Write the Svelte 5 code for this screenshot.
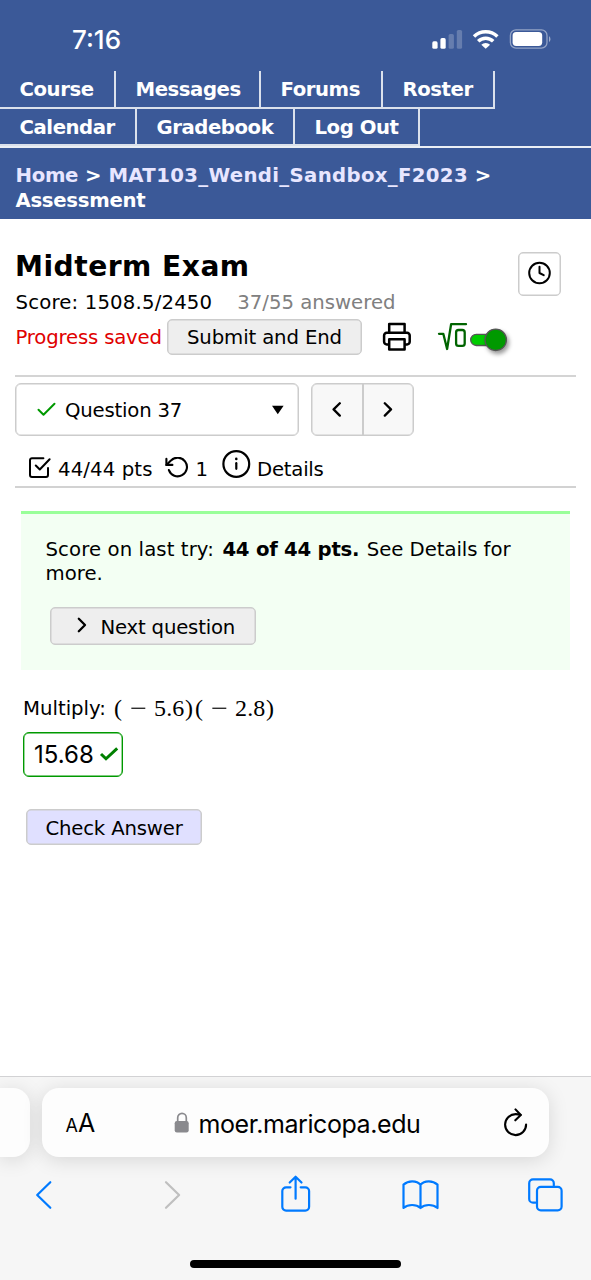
<script>
  const rows = [
    [
      { label: 'Course', w: 116 },
      { label: 'Messages', w: 145 },
      { label: 'Forums', w: 122 },
      { label: 'Roster', w: 111.5 }
    ],
    [
      { label: 'Calendar', w: 137 },
      { label: 'Gradebook', w: 158 },
      { label: 'Log Out', w: 125 }
    ]
  ];
</script>

<div class="page">
  <header>
    <div class="status">
      <span class="time">7:16</span>
      <svg width="120" height="24" viewBox="0 0 120 24" fill="#fff">
        <rect x="0.3" y="13.3" width="5.3" height="7.5" rx="1.6" />
        <rect x="8.4" y="10.1" width="5.3" height="10.7" rx="1.6" />
        <rect x="16.6" y="6" width="5.3" height="14.8" rx="1.6" opacity=".22" />
        <rect x="24.8" y="2" width="5.3" height="18.8" rx="1.6" opacity=".22" />
        <g fill="none" stroke="#fff" stroke-width="3.5">
          <path d="M42 8.400a17 17 0 0 1 23.400 0" />
          <path d="M46.200 13.200a10.800 10.800 0 0 1 15 0" />
        </g>
        <path d="M49.300 16.700a6.300 6.300 0 0 1 8.800 0L53.700 20.800z" />
        <rect x="78.400" y="1.800" width="36.600" height="18.400" rx="5.600" fill="none" stroke="#fff" stroke-width="1.300" opacity=".45" />
        <rect x="80.600" y="4.100" width="29.600" height="13.800" rx="3.600" />
        <path d="M117 7.900q3 3.200 0 6.400z" opacity=".5" />
      </svg>
    </div>
    <nav>
      {#each rows as row}
        <div class="navrow">
          {#each row as c}
            <a style:width="{c.w}px">{c.label}</a>
          {/each}
        </div>
      {/each}
    </nav>
    <div class="crumbs">
      <div><span class="lnk home-link">Home</span> &gt; <span class="lnk course">MAT103_Wendi_Sandbox_F2023</span> &gt;</div>
      <div class="here">Assessment</div>
    </div>
  </header>

  <main>
    <div class="top">
      <div>
        <h1>Midterm Exam</h1>
        <div class="score"><span class="total">Score: 1508.5/2450</span><span class="answered">37/55 answered</span></div>
      </div>
      <button class="clock" aria-label="Time">
        <svg width="26" height="26" viewBox="0 0 26 26" fill="none" stroke="#000" stroke-width="2" stroke-linecap="round" stroke-linejoin="round">
          <circle cx="12.500" cy="12" r="10.300" /><path d="M12.500 5.800V12l4.200 2.200" />
        </svg>
      </button>
    </div>
    <div class="progress">
      <span class="saved">Progress saved</span>
      <button class="btn submit">Submit and End</button>
      <svg class="print" width="30" height="30" viewBox="0 0 30 30" fill="none" stroke="#000" stroke-width="2.500" stroke-linejoin="round">
        <path d="M7.200 10.800V2h15.400v8.800" />
        <path d="M7.200 22.400H4.700a2.600 2.600 0 0 1-2.600-2.600v-6.400a2.600 2.600 0 0 1 2.600-2.600h20.400a2.600 2.600 0 0 1 2.600 2.600v6.400a2.600 2.600 0 0 1-2.600 2.600h-2.500" />
        <rect x="7.200" y="17.200" width="15.400" height="10.200" />
      </svg>
      <svg class="math" width="80" height="44" viewBox="0 0 80 44">
        <g fill="none" stroke="#006400" stroke-width="2.300" stroke-linejoin="round" stroke-linecap="round">
          <path d="M3 18.800H7.300L11.100 34 15.100 9.200H30" />
          <rect x="20.100" y="15" width="8.600" height="15.800" rx="2.400" />
        </g>
        <rect x="34.700" y="19.300" width="30" height="11.200" rx="5.600" fill="#0c0" stroke="#555" stroke-width="1.300" />
        <circle class="knob" cx="59.700" cy="24.800" r="10.700" fill="#090" stroke="#555" stroke-width="1.300" />
      </svg>
    </div>
    <div class="selector">
      <div class="select">
        <svg width="20" height="16" viewBox="0 0 20 16" fill="none" stroke="#090" stroke-width="2" stroke-linecap="round" stroke-linejoin="round"><path d="M2.500 7.700l5 5L18.500 1.800" /></svg>
        <span class="q">Question 37</span>
        <svg class="caret" width="12" height="10" viewBox="0 0 12 10"><path d="M0 .8h11.600L5.800 9.200z" /></svg>
      </div>
      <div class="pair">
        <button aria-label="Previous"><svg width="12" height="16" viewBox="0 0 12 16"><path d="M8.800 1.300L2.600 7.400l6.200 6.200" /></svg></button>
        <button aria-label="Next"><svg width="12" height="16" viewBox="0 0 12 16"><path d="M2.800 1.300L9 7.400l-6.200 6.200" /></svg></button>
      </div>
    </div>
    <div class="details">
      <svg class="i1" width="24" height="24" viewBox="0 0 24 24" fill="none" stroke="#000" stroke-width="2" stroke-linecap="round" stroke-linejoin="round">
        <path d="M8.800 9.500l4 4L22.600 3.200" /><path d="M21 12v6.900a2 2 0 0 1-2 2H5a2 2 0 0 1-2-2V4.200a2 2 0 0 1 2-2h11.400" />
      </svg>
      <span class="pts">44/44 pts</span>
      <svg class="i2" width="24" height="22" viewBox="0 0 24 22" fill="none" stroke="#000" stroke-width="2.100" stroke-linecap="round" stroke-linejoin="round">
        <path d="M1.400 1.900v6h6" /><path d="M3.900 13.100a9.300 9.300 0 1 0 2-9.500L1.400 7.900" />
      </svg>
      <span class="one">1</span>
      <svg class="i3" width="30" height="30" viewBox="0 0 30 30" fill="none" stroke="#000" stroke-width="2.200" stroke-linecap="round">
        <circle cx="15.300" cy="15" r="12.900" /><path d="M15.300 14.200v5.600" /><path d="M15.300 9.900v.1" stroke-width="2.600" />
      </svg>
      <span class="det">Details</span>
    </div>

    <section class="result">
      <p><span class="last">Score on last try:</span><b>44 of 44 pts.</b><span class="see">See Details for</span><br />more.</p>
      <button class="btn next">
        <svg width="12" height="16" viewBox="0 0 12 16"><path d="M2.800 1.800L9 8l-6.200 6.200" /></svg>
        <span>Next question</span>
      </button>
    </section>

    <div class="question">
      <span>Multiply:</span>
      <span class="formula"><span class="op">(</span><span class="minus"><i>−</i></span><span class="num">5.6</span><span class="cl">)</span><span class="op">(</span><span class="minus"><i>−</i></span><span class="num">2.8</span><span class="cl">)</span></span>
    </div>
    <div class="answer">
      <span>15.68</span>
      <svg width="20" height="16" viewBox="0 0 20 16" fill="none" stroke="#008000" stroke-width="3"><path d="M2 8l5 4.800L18.200 2.400" /></svg>
    </div>
    <button class="btn check">Check Answer</button>
  </main>

  <footer>
    <div class="tabs">
      <div class="prevtab"></div>
      <div class="url">
        <span class="aa"><small>A</small>A</span>
        <svg class="lock" width="16" height="22" viewBox="0 0 16 22"><path d="M3.700 10V5.700a4.300 4.300 0 0 1 8.600 0V10" fill="none" stroke="#8a8a8e" stroke-width="1.700" /><rect x=".7" y="9" width="14" height="11.400" rx="2.200" fill="#8a8a8e" /></svg>
        <span class="host">moer.maricopa.edu</span>
        <svg class="reload" width="26" height="30" viewBox="0 0 26 30" fill="none" stroke="#000" stroke-width="2.100" stroke-linecap="round" stroke-linejoin="round">
          <path d="M23.100 16.600a10.500 10.500 0 1 1-10.500-10.500q2.600 0 5 .900" /><path d="M12.500 1.400l5.300 5.600-5.500 5.300" />
        </svg>
      </div>
    </div>
    <div class="tools">
      <svg width="591" height="50" viewBox="0 0 591 50" fill="none" stroke="#007aff" stroke-width="2.200" stroke-linecap="round" stroke-linejoin="round">
        <path d="M50.300 13.200L37.200 26 50.300 38.800" />
        <path d="M166 13.200l13.100 12.800L166 38.800" stroke="#bfbfbf" />
        <path d="M290.500 18.300h-4.400a3.800 3.800 0 0 0-3.800 3.800v15.700a3.800 3.800 0 0 0 3.800 3.800h19.200a3.800 3.800 0 0 0 3.800-3.800V22.100a3.800 3.800 0 0 0-3.800-3.800h-4.600" />
        <path d="M295.600 29.700V8.300M289.700 13.500l5.900-5.800 5.900 5.800" />
        <path d="M420.500 15.800c-2-2.600-5-3.500-8.300-3.500-3.400 0-6.500 1.300-8.700 3.300V39c2.600-2.200 5.400-3 8.600-3 3.300 0 6.300 1 8.400 3 2.200-2 5-3 8.400-3 3.200 0 6 .8 8.600 3V15.600c-2.200-2-5.300-3.300-8.700-3.300-3.300 0-6.300.9-8.300 3.500zV39" />
        <path d="M535.400 33.700h-2.400a3.800 3.800 0 0 1-3.800-3.800V14.200a3.800 3.800 0 0 1 3.800-3.800h17a3.800 3.800 0 0 1 3.800 3.800v2.300" />
        <rect x="537" y="17.900" width="24.600" height="23.400" rx="3.800" />
      </svg>
    </div>
    <div class="home"></div>
  </footer>
</div>

<style>
  :global(body) { margin: 0; background: #fff; }
  * { box-sizing: border-box; }
  .page {
    width: 591px; height: 1280px; display: flex; flex-direction: column; overflow: hidden;
    font: 19.7px/24.4px 'DejaVu Sans', Verdana, sans-serif; color: #000; background: #fff;
  }
  svg { flex: none; display: block; }
  button { font: inherit; color: inherit; padding: 0; margin: 0; }
  span, b, button { white-space: pre; }
  header { height: 218.5px; background: #3b5998; color: #fff; font-weight: bold; flex: none; }
  .status { height: 71px; display: flex; justify-content: space-between; padding: 28px 39px 0 72px; }
  .time { font: 500 26px/24px Inter, sans-serif; }
  nav { border-bottom: 2px solid rgba(255, 255, 255, .9); height: 77px; }
  .navrow { display: flex; height: 38px; }
  .navrow:last-child { height: 37px; }
  .navrow a { border: solid rgba(255, 255, 255, .82); border-width: 0 2px 2px 0; padding: 7px 0 0 19.500px; letter-spacing: -.45px; }
  .crumbs { padding: 16.300px 0 0 15.500px; }
  .lnk { color: #e8e6ff; }
  .home-link, .here { letter-spacing: -.3px; }
  .course { letter-spacing: .34px; }
  main { flex: 1; padding: 0 15px; display: flex; flex-direction: column; }
  .top { display: flex; justify-content: space-between; height: 99px; padding: 31px 15px 0 0; }
  h1 { margin: 0; font-size: 28.100px; line-height: 33px; letter-spacing: .5px; }
  .score { display: flex; gap: 25px; margin-top: 8px; padding-left: .5px; }
  .total { letter-spacing: .17px; }
  .answered { color: #808080; }
  .clock { width: 43px; height: 44px; margin-top: 2px; border: 1px solid #ccc; box-shadow: inset 0 0 0 .5px #ccc; border-radius: 5px; background: #fff; display: grid; place-items: center; }
  .progress { display: flex; align-items: center; height: 59px; padding-bottom: 19px; border-bottom: 2px solid #d4d4d4; }
  .saved { color: #e00000; width: 152px; padding: 4px 0 0 .500px; letter-spacing: -.18px; }
  .btn { background: #eee; border: 1px solid #ccc; box-shadow: inset 0 0 0 .5px #ccc; border-radius: 5px; display: flex; align-items: center; justify-content: center; padding-top: 4px; }
  .submit { width: 195px; height: 36px; letter-spacing: -.13px; }
  .print { margin-left: 20px; }
  .math { margin-left: 24px; }
  .knob { filter: drop-shadow(2px 3px 2px rgba(0, 0, 0, .4)); }
  .selector { display: flex; gap: 12px; padding-top: 6.500px; height: 59.500px; }
  .select { width: 284px; height: 53px; border: 1px solid #ccc; box-shadow: inset 0 0 0 .5px #ccc; border-radius: 6px; display: flex; align-items: center; padding: 0 14px 0 20px; }
  .q { margin-left: 9px; padding-top: 4px; letter-spacing: -.2px; }
  .caret { margin-left: auto; }
  .pair { width: 103px; height: 53px; display: flex; border: 1px solid #ccc; box-shadow: inset 0 0 0 .5px #ccc; border-radius: 6px; background: #f8f8f8; }
  .pair button { flex: 1; border: 0; background: none; display: grid; place-items: center; }
  .pair button + button { border-left: 2px solid #ccc; }
  .pair path, .next path { fill: none; stroke: #000; stroke-width: 2.300; stroke-linecap: round; stroke-linejoin: round; }
  .details { display: flex; height: 52px; border-bottom: 2px solid #d2d2d2; padding-top: 12px; }
  .i1 { margin: 7.500px 0 0 12px; }
  .pts { margin: 10px 0 0 7px; letter-spacing: .12px; }
  .i2 { margin: 8.500px 0 0 12px; }
  .one { margin: 10px 0 0 7px; }
  .i3 { margin: 1px 0 0 12.500px; }
  .det { margin: 10px 0 0 6.500px; letter-spacing: -.25px; }
  .result { margin: 23px 6px 0; height: 158.500px; border-top: 3px solid #9f9; background: #f3fff3; padding: 24px 24px 0; }
  .result p { margin: 0; height: 49px; padding-left: .500px; }
  .last { letter-spacing: .1px; margin-right: 8.500px; }
  b { letter-spacing: -.25px; margin-right: 7.500px; }
  .see { letter-spacing: -.06px; }
  .next { margin: 20px 0 0 5px; width: 205.500px; height: 37.500px; justify-content: flex-start; padding-left: 24px; letter-spacing: -.2px; }
  .next svg { margin: -6px 13px 0 .500px; }
  .question { margin: 21.500px 8px 0; height: 36px; display: flex; align-items: center; }
  .formula { font-family: 'Liberation Serif', serif; font-size: 24px; margin: -2px 0 0 8px; display: flex; }
  .op { width: 16px; }
  .minus { width: 24px; }
  .minus i { display: inline-block; font-style: normal; transform: scaleX(1.25); transform-origin: 0 50%; }
  .num { width: 31px; letter-spacing: .2px; }
  .cl { width: 10px; }
  .answer { margin: 4.500px 0 0 8px; width: 100px; height: 45px; border: 1px solid #090; box-shadow: inset 0 0 0 .4px #090; border-radius: 6px; display: flex; align-items: center; padding-left: 10px; font: 24px/28px Inter, sans-serif; }
  .answer span { padding-top: 2px; }
  .answer svg { margin-left: 5px; }
  .check { margin: 32.500px 0 0 11px; width: 176px; height: 36px; background: #e0e0ff; flex: none; letter-spacing: -.18px; }
  footer { height: 204px; flex: none; background: #f6f6f6; border-top: 1px solid #d2d2d4; overflow: hidden; }
  .tabs { display: flex; gap: 12px; padding-top: 11px; }
  .prevtab, .url { height: 69px; background: #fdfdfd; border-radius: 17px; box-shadow: 0 3px 20px rgba(0, 0, 0, .13); }
  .prevtab { width: 30px; border-radius: 0 17px 17px 0; }
  .url { width: 506.500px; display: flex; align-items: center; padding: 0 20px 0 23.500px; font: 25px/32px Inter, sans-serif; }
  .aa { width: 52px; padding-top: 4px; }
  .aa small { font-size: 18px; }
  .lock { margin-left: 56px; }
  .host { margin-left: 9px; padding-top: 2px; letter-spacing: -.42px; }
  .reload { margin-left: auto; }
  .tools { height: 50px; margin-top: 12px; }
  .home { width: 210.500px; height: 8px; border-radius: 4px; background: #000; margin: 41px auto 0; }
</style>
